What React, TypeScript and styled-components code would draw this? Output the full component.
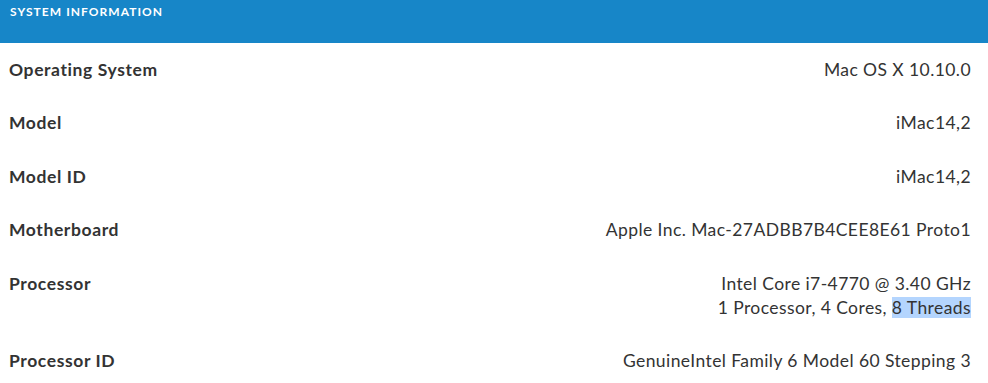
import styled, { createGlobalStyle } from "styled-components";

const GlobalStyle = createGlobalStyle`
  html, body {
    margin: 0;
    padding: 0;
    background: #ffffff;
  }
  body {
    font-family: Lato, "Noto Sans", "Liberation Sans", sans-serif;
    color: #333333;
  }
`;

const Panel = styled.section`
  width: 988px;
  height: 383px;
  overflow: hidden;
  background: #fff;
`;

const Header = styled.header`
  height: 43px;
  background: #1786c8;
  padding: 4px 10px 0;
  box-sizing: border-box;
`;

const Title = styled.h2`
  margin: 0;
  color: #ffffff;
  font-size: 12px;
  font-weight: 700;
  letter-spacing: 1.05px;
  line-height: 16px;
`;

const Row = styled.div`
  display: flex;
  justify-content: space-between;
  align-items: flex-start;
  padding: 14.5px 17px 15.1px 9px;
  line-height: 24px;
  font-size: 17.5px;
`;

const Label = styled.div`
  font-weight: 700;
  letter-spacing: 0.6px;
  color: #333;
`;

const Value = styled.div`
  text-align: right;
  letter-spacing: 0.42px;
  color: #333;
`;

const Selected = styled.span`
  background: #b4d5fe;
`;

type Item = { label: string; lines: React.ReactNode[] };

const items: Item[] = [
  { label: "Operating System", lines: ["Mac OS X 10.10.0"] },
  { label: "Model", lines: ["iMac14,2"] },
  { label: "Model ID", lines: ["iMac14,2"] },
  { label: "Motherboard", lines: ["Apple Inc. Mac-27ADBB7B4CEE8E61 Proto1"] },
  {
    label: "Processor",
    lines: [
      "Intel Core i7-4770 @ 3.40 GHz",
      <>
        1 Processor, 4 Cores, <Selected>8 Threads</Selected>
      </>,
    ],
  },
  { label: "Processor ID", lines: ["GenuineIntel Family 6 Model 60 Stepping 3"] },
];

export default function App() {
  return (
    <>
      <GlobalStyle />
      <Panel>
        <Header>
          <Title>SYSTEM INFORMATION</Title>
        </Header>
        {items.map((it) => (
          <Row key={it.label}>
            <Label>{it.label}</Label>
            <Value>
              {it.lines.map((l, i) => (
                <div key={i}>{l}</div>
              ))}
            </Value>
          </Row>
        ))}
      </Panel>
    </>
  );
}
